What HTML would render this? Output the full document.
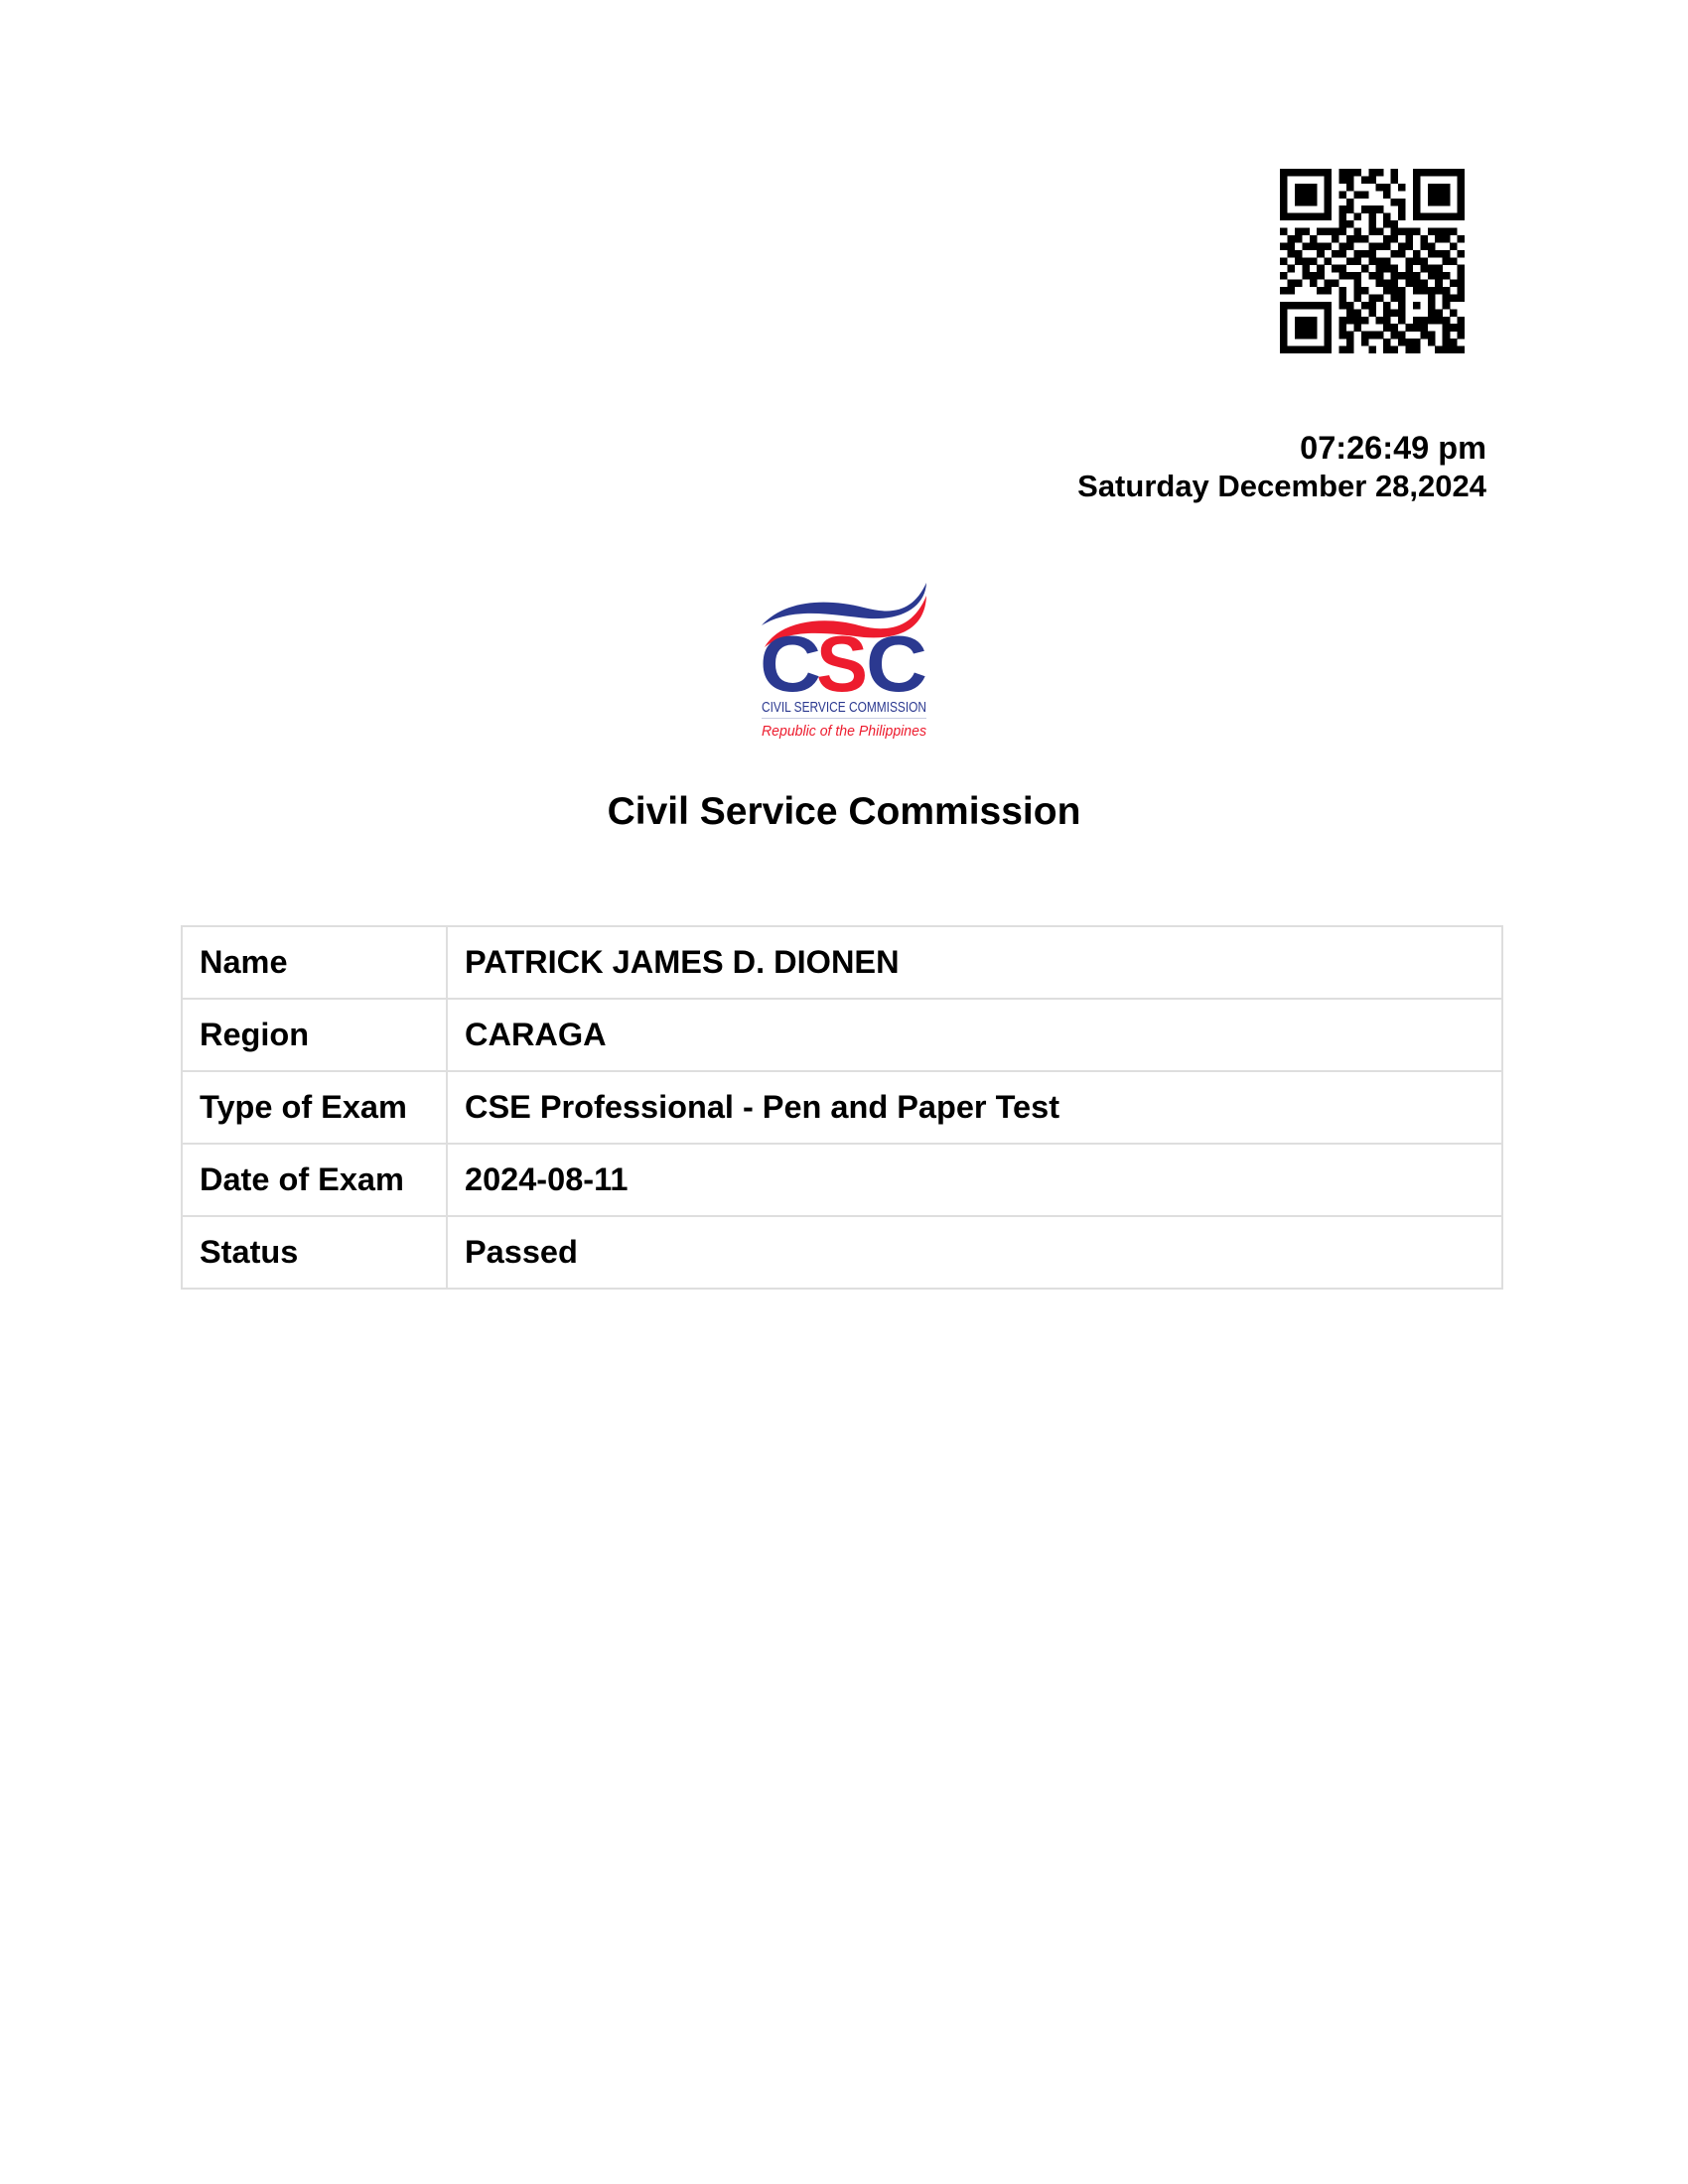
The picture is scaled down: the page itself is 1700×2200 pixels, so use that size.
<!DOCTYPE html>
<html><head><meta charset="utf-8"><style>
html,body{margin:0;padding:0;background:#fff}
body{width:1700px;height:2200px;position:relative;font-family:"Liberation Sans",Arial,sans-serif;color:#000;overflow:hidden}
#qr{position:absolute;left:1289px;top:170px;width:186px;height:186px}
.dt{position:absolute;right:203px;text-align:right;font-weight:bold;font-size:31px;line-height:38px;top:432px}
.dt .t{font-size:32.5px}
#logo{position:absolute;left:760px;top:580px}
h1{position:absolute;top:796px;left:0;width:1700px;text-align:center;margin:0;font-size:39px;font-weight:bold}
table{position:absolute;left:182px;top:932px;width:1332px;border-collapse:collapse}
td{border:2px solid #dedede;height:73px;font-size:32.5px;font-weight:bold;padding:0 0 0 17px;box-sizing:border-box}
td.k{width:267px}
</style></head><body>
<svg id="qr" viewBox="0 0 25 25" shape-rendering="crispEdges"><g id="qg" fill="#000"></g></svg>
<div class="dt"><span class="t">07:26:49 pm</span><br>Saturday December 28,2024</div>
<svg id="logo" width="180" height="170" viewBox="0 0 180 170">
<path d="M7 50 C30 25 70 22 110 32 C140 40 160 35 173 7 C172 30 150 45 115 43 C80 40 40 30 7 50Z" fill="#2b3990"/>
<path d="M10 72 C25 45 70 40 105 50 C135 58 160 52 173 20 C172 50 150 65 110 62 C75 58 35 52 10 72Z" fill="#ed1c2e"/>
<text x="5" y="116" font-family="Liberation Sans" font-weight="bold" font-size="80" fill="#2b3990" textLength="62" lengthAdjust="spacingAndGlyphs">C</text>
<text x="62" y="116" font-family="Liberation Sans" font-weight="bold" font-size="80" fill="#ed1c2e" textLength="52" lengthAdjust="spacingAndGlyphs">S</text>
<text x="112" y="116" font-family="Liberation Sans" font-weight="bold" font-size="80" fill="#2b3990" textLength="62" lengthAdjust="spacingAndGlyphs">C</text>
<text x="7" y="137" font-family="Liberation Sans Narrow, Liberation Sans" font-size="15" fill="#2b3990" textLength="166" lengthAdjust="spacingAndGlyphs">CIVIL SERVICE COMMISSION</text>
<rect x="7" y="143" width="166" height="1" fill="#c8cce0"/>
<text x="7" y="161" font-family="Liberation Sans Narrow, Liberation Sans" font-style="italic" font-size="15" fill="#ed1c2e" textLength="166" lengthAdjust="spacingAndGlyphs">Republic of the Philippines</text>
</svg>
<h1>Civil Service Commission</h1>
<table>
<tr><td class="k">Name</td><td>PATRICK JAMES D. DIONEN</td></tr>
<tr><td class="k">Region</td><td>CARAGA</td></tr>
<tr><td class="k">Type of Exam</td><td>CSE Professional - Pen and Paper Test</td></tr>
<tr><td class="k">Date of Exam</td><td>2024-08-11</td></tr>
<tr><td class="k">Status</td><td>Passed</td></tr>
</table>
<script>
var r=["1111111011101101001111111","1000001011011001001000001","1011101001000110101011101","1011101010110010001011101","1011101001000001101011101","1000001011011100101000001","1111111010101010101111111","0000000011001011000000000","1011011110101101111011110","0110100101110011010101101","1101111011001110110110010","0110010110111001101011101","1011101001101110011100110","0101010110010111010111001","1001110011101101111011101","0110101100100111011101011","1100011010110011101111101","0000000010101101100010111","1111111011011010101010100","1000001001101011100011010","1011101011110110101111101","1011101010100011011100111","1011101011011101100110101","1000001001010010111010110","1111111011001011011001111"];
var s="";for(var y=0;y<25;y++)for(var x=0;x<25;x++)if(r[y][x]=="1")s+='<rect x="'+x+'" y="'+y+'" width="1.02" height="1.02"/>';
document.getElementById("qg").innerHTML=s;
</script>
</body></html>
